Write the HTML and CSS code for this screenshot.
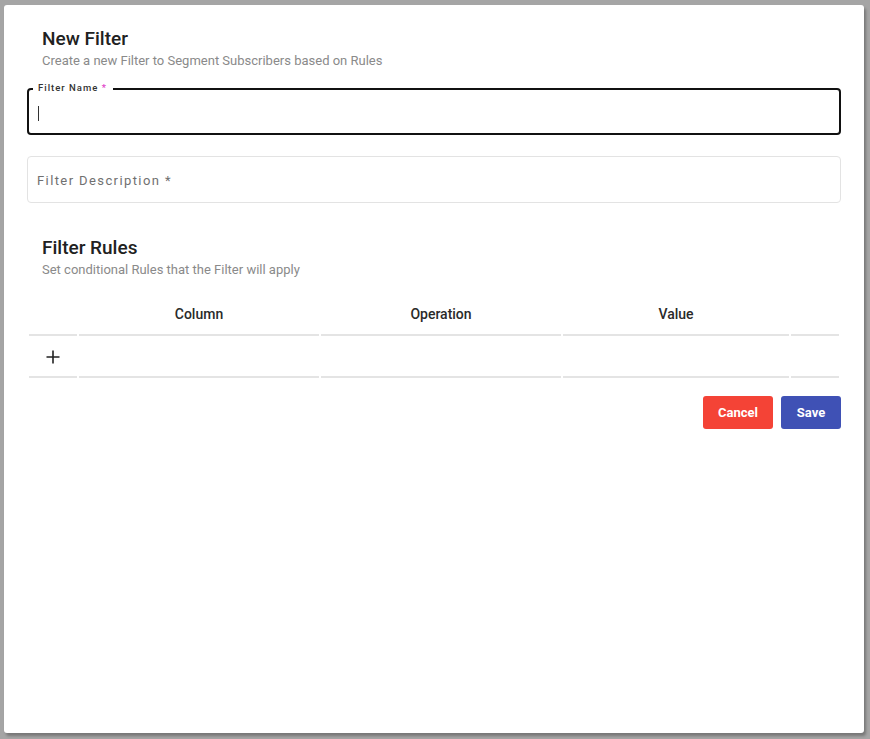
FILE: index.html
```html
<!DOCTYPE html>
<html lang="en">
<head>
<meta charset="utf-8">
<title>New Filter</title>
<link rel="stylesheet" href="styles.css">
</head>
<body>
<div class="dialog">
  <div class="section-head first">
    <h2 class="title">New Filter</h2>
    <p class="subtitle">Create a new Filter to Segment Subscribers based on Rules</p>
  </div>
  <div class="field field-active">
    <span class="float-label">Filter Name <span class="req">*</span></span>
    <span class="caret"></span>
  </div>
  <div class="field field-idle">
    <span class="placeholder">Filter Description *</span>
  </div>
  <div class="section-head second">
    <h2 class="title">Filter Rules</h2>
    <p class="subtitle">Set conditional Rules that the Filter will apply</p>
  </div>
  <table class="rules">
    <thead>
      <tr>
        <th class="c-narrow"></th>
        <th class="c-col">Column</th>
        <th class="c-op">Operation</th>
        <th class="c-val">Value</th>
        <th class="c-narrow"></th>
      </tr>
    </thead>
    <tbody>
      <tr>
        <td class="add-cell">
          <svg class="plus" width="14" height="14" viewBox="0 0 14 14"><path d="M7 0.5V13.5M0.5 7H13.5" stroke="#222" stroke-width="1.6" fill="none"/></svg>
        </td>
        <td></td>
        <td></td>
        <td></td>
        <td></td>
      </tr>
    </tbody>
  </table>
  <div class="actions">
    <button class="btn btn-cancel">Cancel</button>
    <button class="btn btn-save">Save</button>
  </div>
</div>
</body>
</html>
```

FILE: styles.css
```css
html, body {
  margin: 0;
  padding: 0;
}
body {
  background: #a5a5a5;
  font-family: Roboto, "Liberation Sans", Arial, sans-serif;
  padding: 5px 0 0 4px;
  height: 739px;
  box-sizing: border-box;
  overflow: hidden;
}
.dialog {
  width: 860px;
  height: 728px;
  background: #fff;
  border-radius: 3px;
  box-sizing: border-box;
  padding: 0 23px;
  box-shadow: 2px 3px 3px rgba(0,0,0,0.28);
}
.section-head {
  padding: 0 15px;
}
.section-head.first {
  padding-top: 23px;
  padding-bottom: 20px;
}
.section-head.second {
  padding-top: 34px;
  padding-bottom: 15px;
}
.title {
  margin: 0;
  font-size: 19px;
  font-weight: 500;
  color: #212121;
  line-height: 22px;
}
.subtitle {
  margin: 3px 0 0;
  font-size: 13px;
  color: #8a8a8a;
  line-height: 15px;
}
.field {
  position: relative;
  height: 47px;
  box-sizing: border-box;
  border-radius: 4px;
}
.field-active {
  border: 2px solid #111;
}
.field-idle {
  border: 1px solid #e3e3e3;
  margin-top: 21px;
  display: flex;
  align-items: center;
  padding-left: 9px;
}
.float-label {
  position: absolute;
  top: -8px;
  left: 4px;
  background: #fff;
  padding: 0 6px 0 5px;
  font-size: 9.5px;
  font-weight: 500;
  letter-spacing: 1px;
  color: #333;
  line-height: 12px;
}
.req {
  color: #e040c8;
}
.caret {
  position: absolute;
  left: 9px;
  top: 16px;
  width: 1px;
  height: 15px;
  background: #333;
}
.placeholder {
  font-size: 13px;
  letter-spacing: 1.4px;
  color: #707070;
  margin-top: 1px;
}
.rules {
  width: 100%;
  border-collapse: separate;
  border-spacing: 2px;
}
.rules th, .rules td {
  border-bottom: 2px solid #e4e4e4;
  padding: 0;
}
.rules th {
  height: 40px;
  font-size: 14px;
  font-weight: 500;
  color: #2a2a2a;
  text-align: center;
  vertical-align: middle;
}
.rules td {
  height: 38px;
}
.c-narrow { width: 48px; }
.c-col { width: 240px; }
.c-op { width: 240px; }
.add-cell {
  text-align: center;
  vertical-align: middle;
}
.plus {
  display: block;
  margin: 0 auto;
}
.actions {
  display: flex;
  justify-content: flex-end;
  gap: 8px;
  margin-top: 16px;
}
.btn {
  height: 33px;
  border: none;
  border-radius: 3px;
  color: #fff;
  font-family: Roboto, "Liberation Sans", Arial, sans-serif;
  font-size: 13px;
  font-weight: 700;
  padding: 0;
  cursor: pointer;
}
.btn-cancel {
  width: 70px;
  background: #f44336;
}
.btn-save {
  width: 60px;
  background: #3f51b5;
}
```
